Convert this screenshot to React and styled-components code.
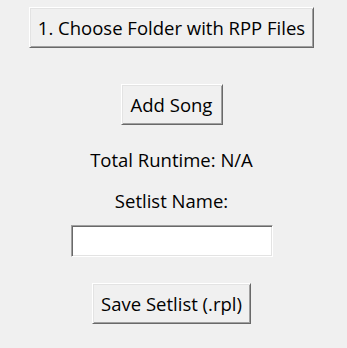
import React, { useState } from 'react';
import styled, { createGlobalStyle } from 'styled-components';

const GlobalStyle = createGlobalStyle`
  html, body {
    margin: 0;
    padding: 0;
    background: #f0f0f0;
  }
  body {
    font-family: "Open Sans", "Noto Sans", sans-serif;
    color: #000;
  }
`;

const Window = styled.div`
  width: 347px;
  height: 348px;
  box-sizing: border-box;
  padding: 7px 4px 0 0;
  display: flex;
  flex-direction: column;
  align-items: center;
  background: #f0f0f0;
`;

const TkButton = styled.button`
  width: ${props => props.w}px;
  height: 41px;
  margin-top: ${props => props.top || 0}px;
  padding: 0;
  box-sizing: border-box;
  font-family: "Open Sans", "Noto Sans", sans-serif;
  font-size: 18.5px;
  color: #000;
  background: #f0f0f0;
  border: 1px solid;
  border-color: #ffffff #696969 #696969 #ffffff;
  box-shadow: inset 1px 1px 0 #e3e3e3, inset -1px -1px 0 #a0a0a0;
  border-radius: 0;
  white-space: nowrap;
  cursor: pointer;

  &:active {
    border-color: #696969 #ffffff #ffffff #696969;
    box-shadow: inset 1px 1px 0 #a0a0a0, inset -1px -1px 0 #e3e3e3;
  }
`;

const Label = styled.div`
  margin-top: ${props => props.top}px;
  font-size: 18.5px;
  line-height: 24px;
  height: 24px;
`;

const Entry = styled.input`
  margin-top: 12px;
  width: 202px;
  height: 32px;
  box-sizing: border-box;
  padding: 0 4px;
  font-family: "Open Sans", "Noto Sans", sans-serif;
  font-size: 18px;
  background: #fff;
  border: 1px solid;
  border-color: #a0a0a0 #ffffff #ffffff #a0a0a0;
  box-shadow: inset 1px 1px 0 #696969, inset -1px -1px 0 #e3e3e3;
  outline: none;
`;

export default function App() {
  const [name, setName] = useState('');

  return (
    <>
      <GlobalStyle />
      <Window>
        <TkButton w={285}>1. Choose Folder with RPP Files</TkButton>
        <TkButton w={102} top={36}>Add Song</TkButton>
        <Label top={23}>Total Runtime: N/A</Label>
        <Label top={17}>Setlist Name:</Label>
        <Entry value={name} onChange={e => setName(e.target.value)} />
        <TkButton w={159} top={26}>Save Setlist (.rpl)</TkButton>
      </Window>
    </>
  );
}
